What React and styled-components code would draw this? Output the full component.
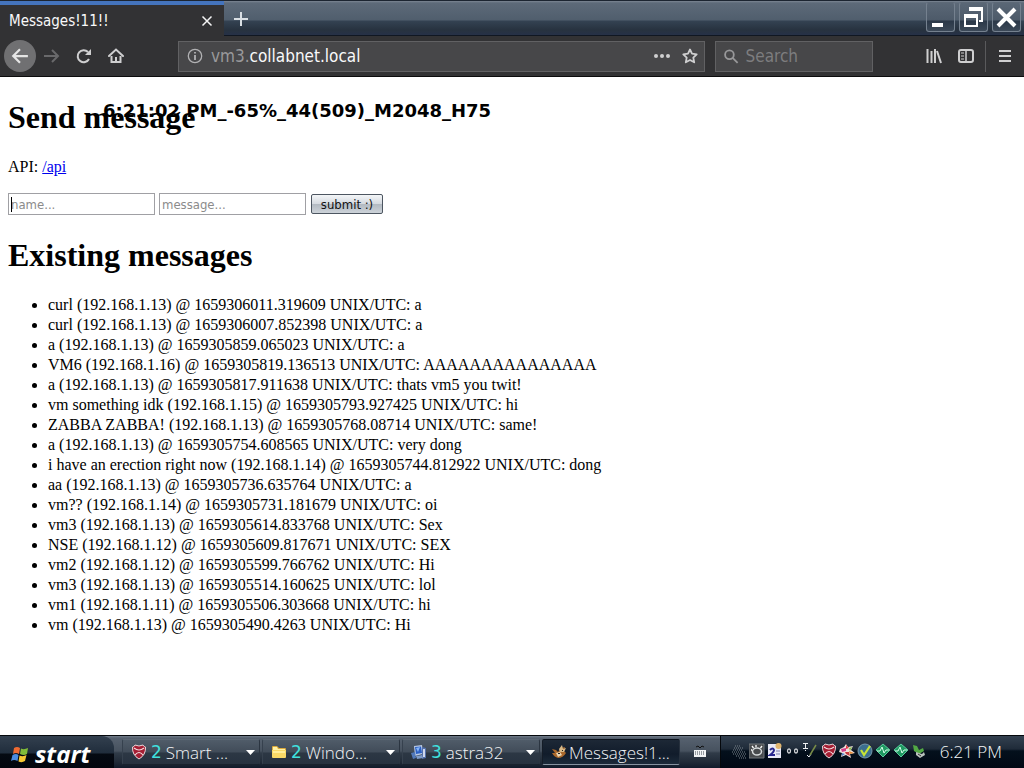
import React from 'react';
import styled, { createGlobalStyle, css } from 'styled-components';

const UI = '"DejaVu Sans Condensed", "DejaVu Sans", Tahoma, sans-serif';
const BAR = '300 17px "Open Sans", Tahoma, sans-serif';
const SERIF = '"Liberation Serif", "Times New Roman", serif';

const GlobalStyle = createGlobalStyle`
  * { box-sizing: border-box; }
  body { margin: 0; background: #fff; }
  button, input { font: inherit; margin: 0; }
`;

const Desktop = styled.div`
  position: relative;
  display: flex;
  flex-direction: column;
  min-height: 100vh;
  font-family: ${UI};
`;

/* ---- browser chrome ---- */
const TitleBar = styled.header`
  display: flex;
  height: 36px;
  border-top: 1px solid #1c2531;
  border-bottom: 1px solid #101722;
  background: linear-gradient(#7c8693 0, #5d6a79 2px, #505e6d 19px, #344252 20px, #27323f 29px, #263147 100%);
`;

const Tab = styled.div`
  display: flex;
  align-items: center;
  justify-content: space-between;
  width: 224px;
  height: 35px;
  padding: 0 8px 0 9px;
  border-top: 4px solid #4474bd;
  background: #323234;
  color: #f9f9fa;
  font: 15px ${UI};
`;

const PlainButton = styled.button`
  display: flex;
  align-items: center;
  justify-content: center;
  flex: none;
  width: ${(p) => p.$w || 32}px;
  height: ${(p) => p.$h || 32}px;
  padding: 0;
  border: 0;
  border-radius: ${(p) => (p.$round ? '50%' : '0')};
  background: ${(p) => (p.$round ? '#707072' : 'transparent')};
  color: ${(p) => (p.$dim ? '#69696b' : '#cfcfd0')};
`;

const WindowButtons = styled.div`
  display: flex;
  gap: 4px;
  margin-left: auto;
  padding: 1px 3px 0 0;
`;

const WindowButton = styled.button`
  width: 29px;
  height: 30px;
  padding: 0;
  border: 1px solid #75818f;
  border-top-color: #5d6977;
  border-radius: 3px;
  background: linear-gradient(#5a6776 0, #4d5a69 17px, #2b3848 18px, #3c4958 100%);
  svg { display: block; }
`;

const NavBar = styled.nav`
  display: flex;
  align-items: center;
  height: 41px;
  padding: 0 3px 0 4px;
  border-bottom: 1px solid #0c0c0d;
  background: #323234;
`;

const NavGroup = styled.div`
  display: flex;
  align-items: center;
`;

const Field = styled.label`
  display: flex;
  align-items: center;
  height: 31px;
  border: 1px solid #616163;
  background: #474749;
  color: #b1b1b3;
`;

const UrlField = styled(Field)`
  flex: 1;
  margin-left: 46px;
  padding-left: 8px;
`;

const SearchField = styled(Field)`
  width: 158px;
  margin: 0 45px 0 10px;
  padding-left: 8px;
  gap: 7px;
`;

const Address = styled.span`
  flex: 1;
  padding-left: 8px;
  font: 17px ${UI};
  color: #99999b;
  b { font-weight: 400; color: #f9f9fa; }
`;

const SearchInput = styled.input`
  width: 100%;
  min-width: 0;
  padding: 0;
  border: 0;
  outline: 0;
  background: transparent;
  color: #f9f9fa;
  font: 17px ${UI};
  &::placeholder { color: #7d7d7f; opacity: 1; }
`;

const Separator = styled.span`
  width: 1px;
  height: 31px;
  margin: 0 3px;
  background: #5a5a5c;
`;

/* ---- web page ---- */
const Page = styled.main`
  flex: 1;
  padding: 8px;
  background: #fff;
  color: #000;
  font: 16px/20px ${SERIF};
`;

const Heading = styled.h1`
  margin: ${(p) => (p.$first ? '13px' : '21px')} 0 21px;
  font: bold 32px/38px ${SERIF};
`;

const Para = styled.p`
  margin: 0 0 16px;
  a { color: #0000ee; }
`;

const Form = styled.form`
  display: flex;
  align-items: center;
  gap: 4px;
  height: 22px;
`;

const TextInput = styled.input`
  width: 147px;
  height: 22px;
  padding: 1px 2px;
  border: 1px solid #a0a0a4;
  border-radius: 0;
  outline: 0;
  background: #fff;
  font: 13px ${UI};
  &::placeholder { color: #8b8b8b; opacity: 1; }
`;

const NameBox = styled.span`
  position: relative;
  display: flex;
  &::before {
    content: '';
    position: absolute;
    left: 3px;
    top: 4px;
    width: 1px;
    height: 15px;
    background: #000;
  }
`;

const Submit = styled.button`
  width: 72px;
  height: 20px;
  margin-left: 1px;
  padding: 0;
  border: 1px solid #4d5661;
  border-radius: 2px;
  background: linear-gradient(#f4f6f8, #d4d9df 50%, #b3bac2 52%, #cdd3d9);
  color: #111;
  font: 13px ${UI};
`;

const MessageList = styled.ul`
  margin: 0;
  padding-left: 40px;
`;

const Overlay = styled.div`
  position: absolute;
  left: 103px;
  top: 101px;
  font: bold 18px/20px "DejaVu Sans", Verdana, sans-serif;
  color: #000;
  white-space: nowrap;
`;

/* ---- taskbar ---- */
const TaskBar = styled.footer`
  display: flex;
  height: 33px;
  border-top: 1px solid #05080c;
  background: linear-gradient(#737e8b 0, #56616f 2px, #47525f 15px, #303b48 17px, #202a37 26px, #101a2a 100%);
  color: #fff;
`;

const StartButton = styled.button`
  display: flex;
  align-items: center;
  gap: 6px;
  width: 114px;
  padding: 4px 0 0 10px;
  border: 0;
  border-top-right-radius: 12px;
  background: linear-gradient(#33404f 0, #202d3c 17px, #050a12 18px, #02060e 100%);
  color: #fff;
  font: italic bold 24px/24px "Open Sans", sans-serif;
`;

const Tasks = styled.div`
  display: flex;
  gap: 2px;
  padding: 3px 0 3px 8px;
`;

const inset = css`
  border-color: #0c131d #27313e #8792a0 #141c27;
  background: linear-gradient(#1d2836 0, #111c2b 14px, #1c2a3a 100%);
`;

const TaskButton = styled.button`
  display: flex;
  align-items: center;
  width: 138px;
  padding: 0 4px 0 8px;
  border: 1px solid;
  border-radius: 2px;
  border-color: #5d6875 #2b3541 #19222e #36414e;
  background: linear-gradient(#505c69, #414c59 50%, #2c3744 54%, #273240);
  color: #f2f4f6;
  font: ${BAR};
  ${(p) => p.$active && inset}
  svg { flex: none; }
`;

const Count = styled.span`
  margin-left: 4px;
  color: #3fe0de;
  font: 17px "DejaVu Sans", Verdana, sans-serif;
`;

const TaskLabel = styled.span`
  flex: 1;
  margin-left: ${(p) => (p.$wide ? 2 : 4)}px;
  text-align: left;
  white-space: nowrap;
`;

const KeyboardButton = styled(PlainButton)`
  height: 31px;
`;

const Tray = styled.div`
  display: flex;
  flex: 1;
  align-items: center;
  justify-content: space-between;
  padding: 0 22px 2px 10px;
  border-left: 1px solid #05080c;
  background: linear-gradient(#344150 0, #1f2b39 13px, #04101c 15px, #010814 100%);
`;

const TrayIcons = styled.div`
  display: flex;
  gap: 2px;
`;

const Clock = styled.time`
  font: ${BAR};
  color: #f4f6f8;
  white-space: nowrap;
`;

const Icon = ({ size = 16, children, ...rest }) => (
  <svg width={size} height={size} viewBox="0 0 16 16" fill="none" stroke="currentColor" strokeWidth="2" aria-hidden="true" {...rest}>
    {children}
  </svg>
);

const Flag = () => (
  <svg width="19" height="19" viewBox="0 0 19 19" aria-hidden="true">
    <path d="M4 3 Q7 1 10 3 L9 9 Q6 7 3 9Z" fill="#ef6a32" />
    <path d="M11 3.500 Q14 5 18 3 L17 9 Q14 11 10 9Z" fill="#82bd39" />
    <path d="M2.500 10 Q6 8 8.500 10 L7.500 16 Q4 14 1 16Z" fill="#4a8be0" />
    <path d="M9.500 10.500 Q13 12 16.500 10 L15 16 Q12 18 8.500 16.500Z" fill="#f8c934" />
  </svg>
);

const Shield = () => (
  <Icon>
    <path d="M1.500 3 Q3 3 4 1 Q8 3 12 1 Q13 3 14.500 3 Q15 11 8 15 Q1 11 1.500 3Z" fill="#a51e33" stroke="#e9d5d8" strokeWidth="1" />
    <path d="M3 4 Q8 8 13 4 M4 11 Q8 6 12 11" stroke="#f3dfe2" strokeWidth="1.200" />
  </Icon>
);

const Folder = () => (
  <Icon stroke="none">
    <path d="M1 3 Q1 2 2 2 H6 L8 4 H14 Q15 4 15 5 V13 H1Z" fill="#dba93a" />
    <path d="M2 3 H6 L7 5 H14 V6 H2Z" fill="#fff1a5" />
    <path d="M1 6 H15 V13 Q15 14 14 14 H2 Q1 14 1 13Z" fill="#f9d967" />
    <path d="M2 7 H14 V9 H2Z" fill="#ffee9a" />
  </Icon>
);

const Computer = () => (
  <Icon stroke="none">
    <path d="M3 2 L11 1 L12 10 L4 12Z" fill="#b8c9e4" />
    <path d="M4 3 L10 2.500 L11 9 L5 10Z" fill="#2c60c4" />
    <path d="M5 4 L9 3 L7 8Z" fill="#85b5f5" />
    <path d="M0 9 L4 8 L5 14 L2 15Z" fill="#5279b9" />
    <path d="M11 3 L15 4 V14 L11 15Z" fill="#5470aa" />
    <path d="M13 5 V13" stroke="#ced8ed" />
    <path d="M5 12 L11 11 L12 14 L6 15Z" fill="#7f9cc9" />
  </Icon>
);

const Fox = () => (
  <Icon stroke="none">
    <path d="M1 5 L5 6 L7 8 L10 4 L14 3 L13 7 L15 9 Q12 14 7 14 Q3 13 1 9 L4 9Z" fill="#a9682c" />
    <path d="M8 5 L11 1 L12 5 L15 4 L13 8 L9 8Z" fill="#d9b987" />
    <path d="M5 9 L9 8 L11 11 L7 13Z" fill="#ead5b2" />
    <path d="M7 9 H9 V10 H7Z M11 6 H12 V7 H11Z" fill="#222" />
  </Icon>
);

const Caret = () => (
  <svg width="9" height="5" viewBox="0 0 9 5" aria-hidden="true"><path d="M0 0 H9 L4.500 5Z" fill="#fff" /></svg>
);

const TrayIconSet = () => (
  <TrayIcons>
    <Icon stroke="#7b848c" strokeWidth="1" strokeDasharray="1 1">
      <path d="M4 3 H10 M3 5 H12 M2 7 H12 M1 9 H14 M2 11 H15 M5 13 H15 M8 15 H15" />
    </Icon>
    <Icon>
      <path d="M0 1 H15 V15 H0Z" fill="#484b4d" stroke="#71777a" strokeWidth="1" />
      <ellipse cx="8" cy="8.500" rx="4.500" ry="3.500" stroke="#d6dadb" strokeWidth="1.500" />
      <path d="M3 3 L4.500 5 M7 2 V4 M13 3 L11.500 5 M2 7 H3" stroke="#fff" strokeWidth="1.300" />
    </Icon>
    <Icon stroke="none">
      <path d="M1 1 H14 V15 H1Z" fill="#e8e9f6" />
      <circle cx="11.500" cy="3" r="3" fill="#e0b56f" />
      <path d="M3 7 Q6 4 7 7 Q7 9 3 12 H8" stroke="#27278e" strokeWidth="2" />
      <path d="M9 8 H13 M9 11 H13" stroke="#777baa" strokeWidth="1" />
    </Icon>
    <Icon strokeWidth="1.300" stroke="#cfd2d5">
      <ellipse cx="4" cy="8" rx="1.500" ry="2" /><ellipse cx="11" cy="8" rx="1.500" ry="2" />
    </Icon>
    <Icon strokeWidth="1">
      <path d="M0 0.500 H5 M2.500 1 V5 M0 5.500 H5 M2.500 7 V8 M4 12 L6 14 L8 11" stroke="#eef0f2" />
      <path d="M7 12 L13 2" stroke="#788b48" strokeWidth="1.500" />
    </Icon>
    <Shield />
    <Icon stroke="none">
      <path d="M1 6 L5 4 L7 1 L9 4 L14 3 L12 7 L16 10 L11 11 L12 15 L7 12 L2 14 L3 10 L0 9Z" fill="#f0e0dd" />
      <path d="M2 6 L7 5 L7 8 L3 9Z" fill="#d23c88" />
      <path d="M7 2 L10 5 L7 6Z" fill="#e23d43" />
      <path d="M10 5 L13 4 L11 8Z" fill="#83bc43" />
      <path d="M10 8 L15 10 L11 11Z" fill="#e58a35" />
      <path d="M6 9 L10 9 L11 13 L7 11Z" fill="#c53b3c" />
      <path d="M3 10 L6 11 L3 13Z" fill="#4b7ec8" />
    </Icon>
    <Icon>
      <circle cx="8" cy="8" r="7" fill="#3c6f8f" stroke="#789bad" strokeWidth="1" />
      <path d="M4 7 L7 12 L13 3" stroke="#c6e436" strokeWidth="2.200" />
    </Icon>
    {[0, 1].map((i) => (
      <Icon key={i}>
        <path d="M8 1 L15 7 L8 14 L1 7Z" fill="#1f9a62" stroke="#58c99a" strokeWidth="1" />
        <path d="M2 8 H5 L7 4 L9 10 L11 7 H14" stroke="#d3ffe9" strokeWidth="1" />
      </Icon>
    ))}
    <Icon stroke="none">
      <path d="M2 2 L6 3 L8 7 L12 5 L13 8 L8 11 L3 8Z" fill="#52a944" />
      <path d="M5 9 L11 11 L13 9 L14 12 L9 15 L5 12Z" fill="#b9c2bd" />
      <path d="M7 11 L10 13" stroke="#333" strokeWidth="1" />
    </Icon>
  </TrayIcons>
);

const messages = [
  ['curl', '192.168.1.13', '1659306011.319609', 'a'],
  ['curl', '192.168.1.13', '1659306007.852398', 'a'],
  ['a', '192.168.1.13', '1659305859.065023', 'a'],
  ['VM6', '192.168.1.16', '1659305819.136513', 'AAAAAAAAAAAAAAA'],
  ['a', '192.168.1.13', '1659305817.911638', 'thats vm5 you twit!'],
  ['vm something idk', '192.168.1.15', '1659305793.927425', 'hi'],
  ['ZABBA ZABBA!', '192.168.1.13', '1659305768.08714', 'same!'],
  ['a', '192.168.1.13', '1659305754.608565', 'very dong'],
  ['i have an erection right now', '192.168.1.14', '1659305744.812922', 'dong'],
  ['aa', '192.168.1.13', '1659305736.635764', 'a'],
  ['vm??', '192.168.1.14', '1659305731.181679', 'oi'],
  ['vm3', '192.168.1.13', '1659305614.833768', 'Sex'],
  ['NSE', '192.168.1.12', '1659305609.817671', 'SEX'],
  ['vm2', '192.168.1.12', '1659305599.766762', 'Hi'],
  ['vm3', '192.168.1.13', '1659305514.160625', 'lol'],
  ['vm1', '192.168.1.11', '1659305506.303668', 'hi'],
  ['vm', '192.168.1.13', '1659305490.4263', 'Hi'],
];

const tasks = [
  { icon: <Shield />, count: 2, label: 'Smart ...' },
  { icon: <Folder />, count: 2, label: 'Windo...' },
  { icon: <Computer />, count: 3, label: 'astra32' },
  { icon: <Fox />, label: 'Messages!1...', active: true },
];

export default function App() {
  return (
    <Desktop>
      <GlobalStyle />
      <TitleBar>
        <Tab>
          Messages!11!!
          <PlainButton $w={18} $h={18} aria-label="Close tab">
            <Icon size={12} stroke="#f5f5f5"><path d="M2 2 L14 14 M14 2 L2 14" /></Icon>
          </PlainButton>
        </Tab>
        <PlainButton $w={34} $h={35} aria-label="New tab">
          <Icon stroke="#d9dfe4"><path d="M8 1 V15 M1 8 H15" /></Icon>
        </PlainButton>
        <WindowButtons>
          <WindowButton aria-label="Minimize">
            <svg width="27" height="28"><path d="M5 20 H16 V24 H5Z" fill="#fff" /></svg>
          </WindowButton>
          <WindowButton aria-label="Restore">
            <svg width="27" height="28" fill="none" stroke="#fff">
              <path d="M10 8 V6 H22 V18 H19" strokeWidth="2" /><path d="M9 6 H23" strokeWidth="4" />
              <path d="M5 14 H17 V23 H5Z" strokeWidth="2" /><path d="M4 13 H18" strokeWidth="4" />
            </svg>
          </WindowButton>
          <WindowButton aria-label="Close">
            <svg width="27" height="28"><path d="M5 6 L22 23 M22 6 L5 23" stroke="#fff" strokeWidth="4" /></svg>
          </WindowButton>
        </WindowButtons>
      </TitleBar>

      <NavBar>
        <NavGroup>
          <PlainButton $round aria-label="Back">
            <Icon size={18} stroke="#e5e5e5"><path d="M15 8 H2 M8 2 L2 8 L8 14" /></Icon>
          </PlainButton>
          <PlainButton $dim aria-label="Forward"><Icon><path d="M0 8 H14 M8 2 L14 8 L8 14" /></Icon></PlainButton>
          <PlainButton aria-label="Reload">
            <Icon><path d="M13 11 A6 6 0 1 1 12 4" /><path d="M15 1 V7 H9Z" fill="currentColor" stroke="none" /></Icon>
          </PlainButton>
          <PlainButton aria-label="Home">
            <Icon><path d="M1 8 L8 1.500 L15 8" strokeLinecap="round" /><path d="M3.500 8 V14 H12.500 V8" /><path d="M8 14 V9" /></Icon>
          </PlainButton>
        </NavGroup>
        <UrlField as="div">
          <Icon strokeWidth="1.300"><circle cx="8" cy="8" r="6.700" /><path d="M8 7 V12 M8 4 V5.500" strokeWidth="1.800" /></Icon>
          <Address>vm3.<b>collabnet.local</b></Address>
          <PlainButton $w={28} $h={28} aria-label="Page actions">
            <Icon fill="currentColor" stroke="none"><circle cx="2" cy="8" r="2" /><circle cx="8" cy="8" r="2" /><circle cx="14" cy="8" r="2" /></Icon>
          </PlainButton>
          <PlainButton $w={28} $h={28} aria-label="Bookmark this page">
            <Icon strokeLinejoin="round"><path d="M8 1.500 L10 5.700 L14.700 6.300 L11.300 9.600 L12.200 14.300 L8 12 L3.800 14.300 L4.700 9.600 L1.300 6.300 L6 5.700Z" strokeWidth="1.800" /></Icon>
          </PlainButton>
        </UrlField>
        <SearchField>
          <Icon size={17} stroke="#98989a"><circle cx="6" cy="6" r="4.800" /><path d="M9.500 9.500 L15 15" /></Icon>
          <SearchInput type="search" placeholder="Search" aria-label="Search" />
        </SearchField>
        <NavGroup>
          <PlainButton aria-label="Library"><Icon><path d="M1.500 1 V15 M5.500 3 V15 M9 1 V15 M11 3 L15 15" /></Icon></PlainButton>
          <PlainButton aria-label="Sidebars">
            <Icon><rect x="1" y="2" width="14" height="12" rx="2" /><path d="M8 2 V14" strokeWidth="1.500" /><path d="M3 5 H6 M3 8 H6 M3 11 H6" strokeWidth="1" /></Icon>
          </PlainButton>
          <Separator />
          <PlainButton aria-label="Open menu"><Icon><path d="M2 3 H14 M2 8 H14 M2 13 H14" /></Icon></PlainButton>
        </NavGroup>
      </NavBar>

      <Page>
        <Heading $first>Send message</Heading>
        <Para>API: <a href="/api">/api</a></Para>
        <Form onSubmit={(e) => e.preventDefault()}>
          <NameBox><TextInput placeholder="name..." aria-label="Name" /></NameBox>
          <TextInput placeholder="message..." aria-label="Message" />
          <Submit type="submit">submit :)</Submit>
        </Form>
        <Heading>Existing messages</Heading>
        <MessageList>
          {messages.map(([name, ip, time, text]) => (
            <li key={time}>{`${name} (${ip}) @ ${time} UNIX/UTC: ${text}`}</li>
          ))}
        </MessageList>
      </Page>

      <Overlay>6:21:02 PM_-65%_44(509)_M2048_H75</Overlay>

      <TaskBar>
        <StartButton><Flag />start</StartButton>
        <Tasks>
          {tasks.map((t) => (
            <TaskButton key={t.label} $active={t.active}>
              {t.icon}
              {t.count && <Count>{t.count}</Count>}
              <TaskLabel $wide={t.active}>{t.label}</TaskLabel>
              {t.count && <Caret />}
            </TaskButton>
          ))}
        </Tasks>
        <KeyboardButton $w={40} aria-label="Keyboard">
          <svg width="14" height="14" viewBox="0 0 14 14" fill="none">
            <path d="M3 2 L5 1 L7 3 L9 1 L11 2" stroke="#111" />
            <path d="M1 5 H13 V12 H1Z" fill="#f1f3f4" />
            <path d="M2 7 H12 M2 9 H12" stroke="#3a444f" strokeDasharray="1 1" />
          </svg>
        </KeyboardButton>
        <Tray>
          <TrayIconSet />
          <Clock>6:21 PM</Clock>
        </Tray>
      </TaskBar>
    </Desktop>
  );
}
